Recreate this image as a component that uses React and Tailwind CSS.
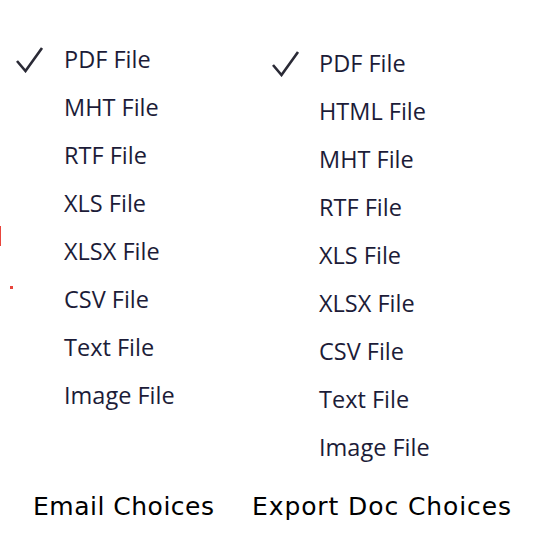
// App.jsx — two menu lists (email / export doc choices)
const EMAIL = ["PDF File", "MHT File", "RTF File", "XLS File", "XLSX File", "CSV File", "Text File", "Image File"];
const EXPORT = ["PDF File", "HTML File", "MHT File", "RTF File", "XLS File", "XLSX File", "CSV File", "Text File", "Image File"];

function Check() {
  return (
    <svg width="28" height="26" viewBox="0 0 28 26" className="block">
      <polyline
        points="1,14 9.5,24 26,1"
        fill="none"
        stroke="#2a2a36"
        strokeWidth="2.6"
        strokeLinejoin="miter"
      />
    </svg>
  );
}

function MenuList({ items, checked = 0, checkW }) {
  return (
    <ul className="flex flex-col">
      {items.map((it, i) => (
        <li key={it + i} className="flex h-12 items-center">
          <span className={`flex shrink-0 items-center ${checkW}`}>
            {i === checked && <Check />}
          </span>
          <span className="text-[23.5px] leading-none text-[#1c1c38]">{it}</span>
        </li>
      ))}
    </ul>
  );
}

export default function App() {
  return (
    <div
      className="relative h-[548px] w-[533px] overflow-hidden bg-white"
      style={{ fontFamily: '"Open Sans", "Noto Sans", sans-serif' }}
    >
      {/* stray red marks from the original capture */}
      <div className="absolute left-0 top-[226px] h-[20px] w-px bg-[#e8453c]" />
      <div className="absolute left-[10px] top-[286px] h-[3px] w-[3px] bg-[#e8453c]" />

      <div className="flex">
        <div className="w-[256px] pl-[16px] pt-[36px]">
          <MenuList items={EMAIL} checkW="w-[48px]" />
        </div>
        <div className="pl-[16px] pt-[40px]">
          <MenuList items={EXPORT} checkW="w-[47px]" />
        </div>
      </div>

      <div
        className="absolute left-0 top-[494px] flex w-full text-[25px] leading-none tracking-[0.5px] text-black"
        style={{ fontFamily: '"DejaVu Sans", Verdana, sans-serif' }}
      >
        <span className="w-[252px] pl-[33px]">Email Choices</span>
        <span className="tracking-[0.9px]">Export Doc Choices</span>
      </div>
    </div>
  );
}
